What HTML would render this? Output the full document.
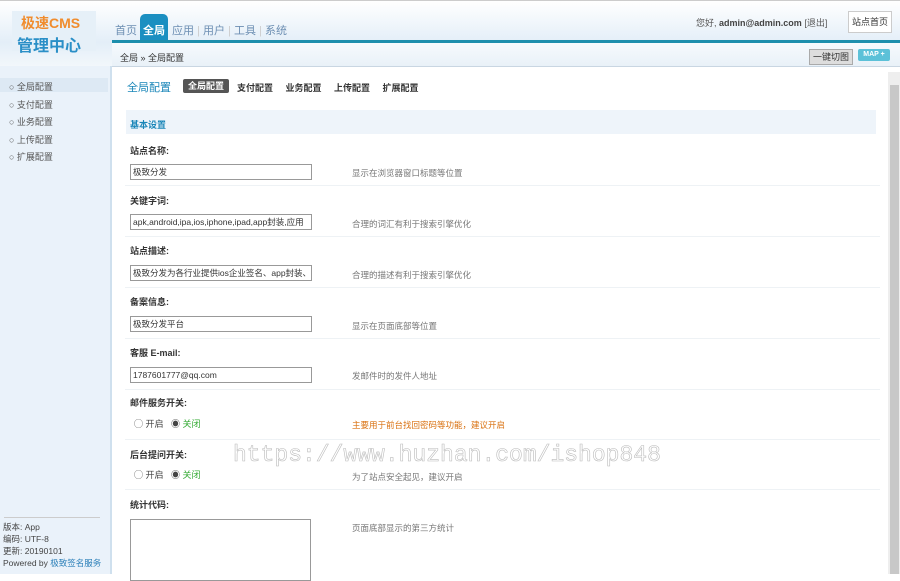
<!DOCTYPE html><html><head><meta charset="utf-8"><style>
body{margin:0;width:900px;height:574px;overflow:hidden;font-family:"Liberation Sans","Noto Sans CJK SC",sans-serif;font-size:9px;color:#333;background:#fff;position:relative}
.a{position:absolute}
.hdr{left:0;top:0;width:900px;height:42px;background:linear-gradient(#fff,#e3eef8);border-top:1px solid #ccc}
.tl{left:112px;top:40px;width:788px;height:3px;background:#1d8fad}
.bc{left:112px;top:43px;width:788px;height:23px;background:linear-gradient(#f6fafd,#e9f1f8);border-bottom:1px solid #c9d6e2}
.side{left:0;top:66px;width:110px;height:508px;background:#eaf2fa;border-right:2px solid #cfe0ee}
.lbl{left:130px;font-weight:bold;color:#333}
.inp{left:130px;width:178px;height:14px;border:1px solid #999;font-size:8.5px;line-height:14px;padding-left:2px;overflow:hidden;white-space:nowrap;background:#fff}
.hint{left:352px;color:#777;font-size:8.5px}
.line{left:125px;width:755px;height:1px;background:#eef2f5}
</style></head><body>
<div class="a hdr"></div>
<div class="a" style="left:0;top:42px;width:112px;height:24px;background:linear-gradient(#e3eef8,#f2f7fb)"></div>
<div class="a" style="left:12px;top:11px;width:84px;height:40px;background:#e6f0f8"></div>
<div class="a" style="left:21px;top:13px;font-size:14px;font-weight:bold;color:#f08c2d">极速CMS</div>
<div class="a" style="left:17px;top:32px;font-size:16px;font-weight:bold;color:#2a8fc7">管理中心</div>
<div class="a" style="left:115px;top:22px;font-size:11px;color:#6d8fb3">首页</div>
<div class="a" style="left:140px;top:14px;width:28px;height:28px;background:#1b8fc1;border-radius:5px 5px 0 0"></div>
<div class="a" style="left:143px;top:22px;font-size:11px;font-weight:bold;color:#fff">全局</div>
<div class="a" style="left:172px;top:22px;font-size:11px;color:#6d8fb3">应用<span style="color:#ccc"> | </span>用户<span style="color:#ccc"> | </span>工具<span style="color:#ccc"> | </span>系统</div>
<div class="a tl"></div>
<div class="a" style="left:696px;top:16px;font-size:9px;color:#555">您好, <b style="color:#444">admin@admin.com</b> [退出]</div>
<div class="a" style="left:848px;top:11px;width:42px;height:20px;border:1px solid #ccc;background:#fff;font-size:9px;line-height:20px;text-align:center">站点首页</div>
<div class="a bc"></div>
<div class="a" style="left:120px;top:51px;font-size:9px">全局 » 全局配置</div>
<div class="a" style="left:809px;top:49px;width:42px;height:14px;background:#ddd;border:1px solid #aaa;font-size:9px;line-height:14px;text-align:center">一键切图</div>
<div class="a" style="left:858px;top:49px;width:32px;height:12px;background:#5cc1d8;border-radius:2px;color:#fff;font-size:7px;font-weight:bold;line-height:12px;text-align:center">MAP +</div>
<div class="a side"></div>
<div class="a" style="left:0;top:78px;width:108px;height:14px;background:#dde9f4"></div>
<div class="a" style="left:9px;top:79px;line-height:17.5px;font-size:9px;color:#555">○ 全局配置<br>○ 支付配置<br>○ 业务配置<br>○ 上传配置<br>○ 扩展配置</div>
<div class="a" style="left:4px;top:517px;width:96px;height:1px;background:#ccc"></div>
<div class="a" style="left:3px;top:521px;line-height:12px;font-size:8.5px;color:#444">版本: App<br>编码: UTF-8<br>更新: 20190101<br>Powered by <span style="color:#2a7fb8">极致签名服务</span></div>
<div class="a" style="left:888px;top:72px;width:12px;height:502px;background:#eee"></div>
<div class="a" style="left:890px;top:85px;width:9px;height:489px;background:#c8c8c8"></div>
<div class="a" style="left:127px;top:79px;font-size:11px;color:#1a86b8">全局配置</div>
<div class="a" style="left:183px;top:79px;width:46px;height:14px;background:#555;border-radius:2px;color:#fff;font-size:9px;font-weight:bold;line-height:14px;text-align:center">全局配置</div>
<div class="a" style="left:237px;top:81px;font-size:9px;font-weight:bold;word-spacing:10px">支付配置 业务配置 上传配置 扩展配置</div>
<div class="a" style="left:126px;top:110px;width:750px;height:24px;background:#eef4fa"></div>
<div class="a" style="left:130px;top:118px;font-size:9px;font-weight:bold;color:#1a86b8">基本设置</div>
<div class="a lbl" style="top:144px">站点名称:</div><div class="a inp" style="top:164px">极致分发</div><div class="a hint" style="top:167px">显示在浏览器窗口标题等位置</div><div class="a line" style="top:185px"></div>
<div class="a lbl" style="top:194px">关键字词:</div><div class="a inp" style="top:214px">apk,android,ipa,ios,iphone,ipad,app封装,应用</div><div class="a hint" style="top:218px">合理的词汇有利于搜索引擎优化</div><div class="a line" style="top:236px"></div>
<div class="a lbl" style="top:244px">站点描述:</div><div class="a inp" style="top:265px">极致分发为各行业提供ios企业签名、app封装、</div><div class="a hint" style="top:269px">合理的描述有利于搜索引擎优化</div><div class="a line" style="top:287px"></div>
<div class="a lbl" style="top:295px">备案信息:</div><div class="a inp" style="top:316px">极致分发平台</div><div class="a hint" style="top:320px">显示在页面底部等位置</div><div class="a line" style="top:338px"></div>
<div class="a lbl" style="top:346px">客服 E-mail:</div><div class="a inp" style="top:367px">1787601777@qq.com</div><div class="a hint" style="top:370px">发邮件时的发件人地址</div><div class="a line" style="top:389px"></div>
<div class="a lbl" style="top:396px">邮件服务开关:</div><div class="a" style="top:417px;left:134px;color:#444">◯ 开启 &nbsp; ◉ <span style="color:#3a3">关闭</span></div><div class="a hint" style="top:419px;color:#d9700f">主要用于前台找回密码等功能，建议开启</div><div class="a line" style="top:439px"></div>
<div class="a lbl" style="top:448px">后台提问开关:</div><div class="a" style="top:468px;left:134px;color:#444">◯ 开启 &nbsp; ◉ <span style="color:#3a3">关闭</span></div><div class="a hint" style="top:471px">为了站点安全起见，建议开启</div><div class="a line" style="top:489px"></div>
<div class="a" style="left:233px;top:442px;font-family:'Liberation Mono',monospace;font-size:23px;color:transparent;-webkit-text-stroke:0.6px #bbb">https://www.huzhan.com/ishop848</div>
<div class="a lbl" style="top:498px">统计代码:</div><div class="a" style="left:130px;top:519px;width:179px;height:60px;border:1px solid #999"></div><div class="a hint" style="top:522px">页面底部显示的第三方统计</div>
</body></html>
